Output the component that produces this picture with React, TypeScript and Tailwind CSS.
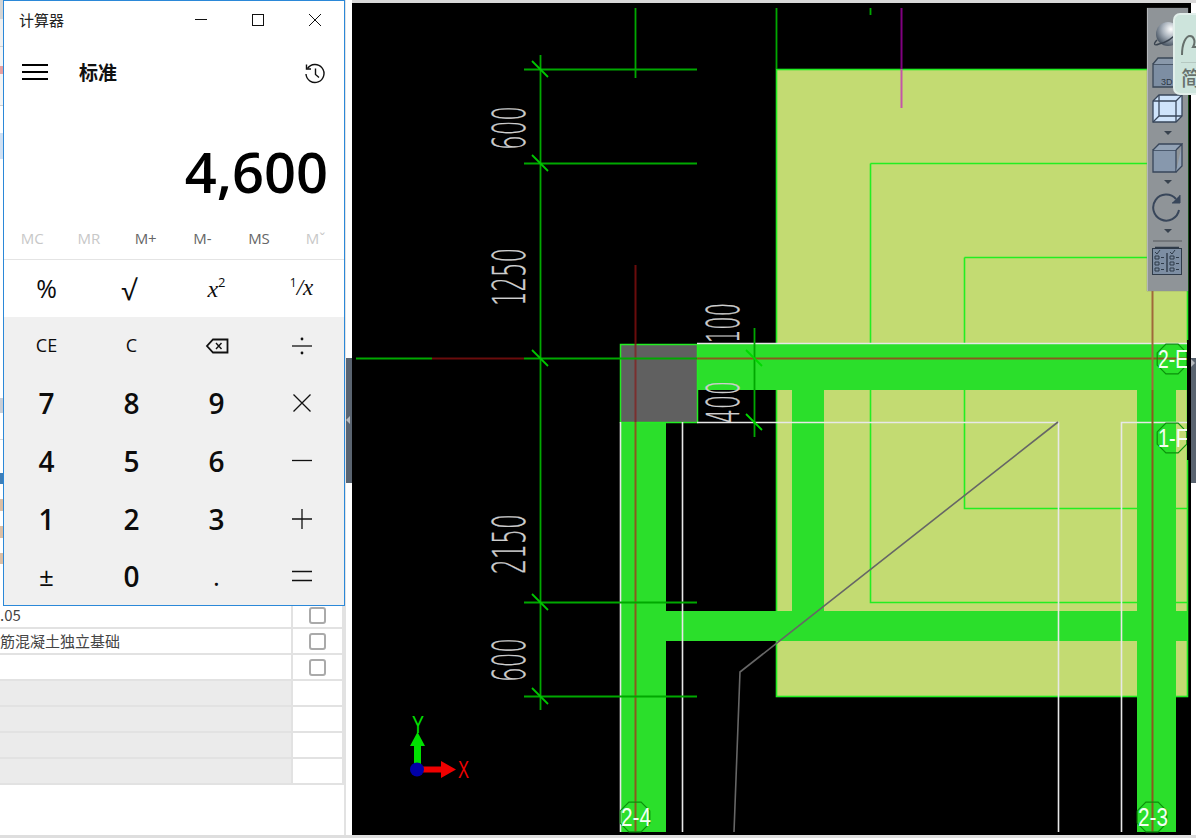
const leftBands = [
  { h: 19, c: "bg-[#d4d4d4]" },
  { h: 27, c: "bg-[#f0f0f0]" },
  { h: 1, c: "bg-[#d0d0d0]" },
  { h: 19, c: "bg-[#f4f4f4]" },
  { h: 8, c: "bg-[#e8a0a0]" },
  { h: 31, c: "bg-[#f4f4f4]" },
  { h: 1, c: "bg-[#d0d0d0]" },
  { h: 27, c: "bg-white" },
  { h: 26, c: "bg-[#cfe0f3]" },
  { h: 239, c: "bg-white" },
  { h: 15, c: "bg-[#c9ced6]" },
  { h: 26, c: "bg-white" },
  { h: 1, c: "bg-[#d8d8d8]" },
  { h: 33, c: "bg-white" },
  { h: 11, c: "bg-[#3f7fb8]" },
  { h: 15, c: "bg-white" },
  { h: 12, c: "bg-[#dcbfa5]" },
  { h: 15, c: "bg-white" },
  { h: 12, c: "bg-[#dcbfa5]" },
  { h: 15, c: "bg-white" },
  { h: 11, c: "bg-[#dcbfa5]" },
  { h: 39, c: "bg-white" },
];

const tableRows = [
  { text: ".05", check: true },
  { text: "筋混凝土独立基础", check: true },
  { text: "", check: true },
  { text: "", check: false },
  { text: "", check: false },
  { text: "", check: false },
  { text: "", check: false },
];

const memoryKeys = [
  { label: "MC", on: false },
  { label: "MR", on: false },
  { label: "M+", on: true },
  { label: "M-", on: true },
  { label: "MS", on: true },
  { label: "Mˇ", on: false },
];

function OpIcon({ d, dots }: { d: string; dots?: boolean }) {
  return (
    <svg width="24" height="24" viewBox="0 0 24 24" fill="none" stroke="#111" strokeWidth="1.3" aria-hidden>
      <path d={d} />
      {dots && (
        <>
          <circle cx="12" cy="5" r="1.4" fill="#111" stroke="none" />
          <circle cx="12" cy="19" r="1.4" fill="#111" stroke="none" />
        </>
      )}
    </svg>
  );
}

function BackIcon() {
  return (
    <svg width="24" height="18" viewBox="0 0 24 18" fill="none" stroke="#111" aria-hidden>
      <path d="M22.5 2.5V15.5H8L2 9L8 2.5Z" strokeWidth="1.8" />
      <path d="M11 6L16.5 12M16.5 6L11 12" strokeWidth="1.4" />
    </svg>
  );
}

function Key({ children, className }: { children: React.ReactNode; className: string }) {
  return <div className={"flex h-full items-center justify-center text-[#0c0c0c] " + className}>{children}</div>;
}

const numKey = "text-[28px] font-semibold";

function Calculator() {
  return (
    <div className="absolute left-[3px] top-0 flex h-[606px] w-[342px] flex-col border border-[#2b88d8] bg-white font-['Open_Sans','Noto_Sans_CJK_SC',sans-serif]">
      <div className="flex h-[38px] shrink-0 items-center pl-[15px] pr-[22px]">
        <span className="flex-1 font-['Noto_Sans_CJK_SC',sans-serif] text-[15px] text-[#222]">计算器</span>
        <svg width="127" height="14" viewBox="0 0 127 14" fill="none" stroke="#111" aria-hidden>
          <path d="M0 6.5H12" />
          <rect x="57.5" y="1.5" width="11" height="11" />
          <path d="M114 1L126 13M126 1L114 13" />
        </svg>
      </div>
      <div className="flex h-[66px] shrink-0 items-center pl-[18px] pr-[18px]">
        <svg width="26" height="16" viewBox="0 0 26 16" stroke="#000" strokeWidth="2" aria-hidden>
          <path d="M0 1H26M0 8H26M0 15H26" />
        </svg>
        <span className="ml-[31px] flex-1 font-['Noto_Sans_CJK_SC',sans-serif] text-[19px] font-bold text-[#111]">标准</span>
        <svg className="mt-[3px]" width="22" height="22" viewBox="0 0 22 22" fill="none" stroke="#111" strokeWidth="1.4" aria-hidden>
          <path d="M3.5 5.5A9 9 0 1 1 2 11" />
          <path d="M2.5 1.5V6H7" />
          <path d="M11.5 5.5V11.5L15 14.5" />
        </svg>
      </div>
      <div className="flex h-[117px] shrink-0 items-end justify-end pb-[13px] pr-[16px]">
        <span className="text-[56px] font-semibold leading-[76px] text-black">4,600</span>
      </div>
      <div className="grid h-[38px] shrink-0 grid-cols-6 items-center border-b border-[#e4e4e4]">
        {memoryKeys.map((key) => (
          <span key={key.label} className={"pb-[4px] text-center text-[15px] " + (key.on ? "text-[#666] font-medium" : "text-[#c8c8c8]")}>
            {key.label}
          </span>
        ))}
      </div>
      <div className="grid h-[57px] shrink-0 grid-cols-4">
        <Key className="text-[25px] font-medium">%</Key>
        <Key className="-ml-[5px] text-[28px]">√</Key>
        <Key className="font-['Liberation_Serif',serif] text-[24px] italic">
          x<sup className="text-[13px] not-italic font-['Open_Sans',sans-serif]">2</sup>
        </Key>
        <Key className="font-['Liberation_Serif',serif] text-[23px] italic">
          <sup className="text-[12px] not-italic font-['Open_Sans',sans-serif]">1</sup>/x
        </Key>
      </div>
      <div className="grid flex-1 grid-cols-4 grid-rows-5 bg-[#f0f0f0]">
        <Key className="text-[18px]">CE</Key>
        <Key className="text-[18px]">C</Key>
        <Key className="">
          <BackIcon />
        </Key>
        <Key className="">
          <OpIcon d="M2 12H22" dots />
        </Key>
        <Key className={numKey}>7</Key>
        <Key className={numKey}>8</Key>
        <Key className={numKey}>9</Key>
        <Key className="">
          <OpIcon d="M3.5 3.5L20.5 20.5M20.5 3.5L3.5 20.5" />
        </Key>
        <Key className={numKey}>4</Key>
        <Key className={numKey}>5</Key>
        <Key className={numKey}>6</Key>
        <Key className="">
          <OpIcon d="M2 11.5H22" />
        </Key>
        <Key className={numKey}>1</Key>
        <Key className={numKey}>2</Key>
        <Key className={numKey}>3</Key>
        <Key className="">
          <OpIcon d="M2 12H22M12 2V22" />
        </Key>
        <Key className="text-[26px]">±</Key>
        <Key className={numKey}>0</Key>
        <Key className="text-[26px]">.</Key>
        <Key className="">
          <OpIcon d="M2 7.5H22M2 16.5H22" />
        </Key>
      </div>
    </div>
  );
}

function hexPoints(cx: number, cy: number, r: number) {
  return Array.from({ length: 8 }, (_, i) => {
    const a = (Math.PI / 4) * i + Math.PI / 8;
    return `${(cx + r * Math.cos(a)).toFixed(1)},${(cy + r * Math.sin(a)).toFixed(1)}`;
  }).join(" ");
}

function DimText({ x, y, len, children }: { x: number; y: number; len: number; children: string }) {
  return (
    <text
      transform={`translate(${x} ${y}) rotate(-90)`}
      textLength={len}
      lengthAdjust="spacingAndGlyphs"
      fontFamily="'DejaVu Sans', sans-serif"
      fontWeight={200}
      fontSize={45}
      fill="#cfcfcf"
      stroke="#cfcfcf"
      strokeWidth="0.4"
    >
      {children}
    </text>
  );
}

function GridMark({ cx, cy, label }: { cx: number; cy: number; label: string }) {
  return (
    <g>
      <polygon points={hexPoints(cx, cy, 16)} fill="none" stroke="#0b8f0b" strokeWidth="1.2" />
      <text
        x={cx - 14}
        y={cy + 9}
        textLength={30}
        lengthAdjust="spacingAndGlyphs"
        fontFamily="'Liberation Sans', sans-serif"
        fontSize={25}
        fill="#f4fff4"
      >
        {label}
      </text>
    </g>
  );
}

function CadDrawing() {
  const ticks = [69, 163, 358, 602, 696];
  return (
    <svg className="block h-[832px] w-[839px]" viewBox="352 3 839 832" aria-hidden>
      <rect x="352" y="3" width="839" height="832" fill="#000" />
      <rect x="776.5" y="69.5" width="411" height="627" fill="#c3db72" stroke="#22ee22" strokeWidth="1.6" />
      <path d="M870.5 163.5V602.5H1187M870.5 163.5H1187M964.5 257.5V508.5H1187M964.5 257.5H1187" fill="none" stroke="#22ee22" strokeWidth="1.6" />

      <g fill="#2bdf2b">
        <rect x="697" y="344" width="490" height="46" />
        <rect x="620" y="422" width="46" height="410" />
        <rect x="792" y="390" width="32" height="221" />
        <rect x="666" y="611" width="521" height="30" />
        <rect x="1137" y="390" width="39" height="442" />
      </g>
      <rect x="620.5" y="344.5" width="77" height="78" fill="#606060" stroke="#22ee22" strokeWidth="1.5" />

      <path
        d="M697 343.5H1187M620.5 422V832M682.5 422V832M697 422.5H1058.5V832M1121.5 832V422.5H1187"
        fill="none"
        stroke="#e8e8e8"
        strokeWidth="1.6"
      />
      <path d="M1058 422L740 672L734 832" fill="none" stroke="#666" strokeWidth="1.6" />

      <path d="M432 358.5H524M635.5 265V344" stroke="#6a0c0c" strokeWidth="2" />
      <path d="M635.5 344V422" stroke="#7a2f2f" strokeWidth="2" />
      <path d="M635.5 422V832M697 358.5H1187M1152.5 390V832" stroke="#8a5a1e" strokeWidth="2" />
      <path d="M1152.5 290V390" stroke="#a0683a" strokeWidth="2" />

      <path
        d="M356 358.5H432M524 358.5H697M540.5 55V710M524 69.5H697M524 163.5H697M524 602.5H697M524 696.5H697M635.5 8V78M776.5 8V69M870.5 8V15M754.5 328V437"
        fill="none"
        stroke="#00a800"
        strokeWidth="1.8"
      />
      {ticks.map((y) => (
        <path key={y} d={`M532 ${y - 8}L548 ${y + 8}`} stroke="#00c800" strokeWidth="1.8" />
      ))}
      <path d="M746 350L762 366M746 414L762 430" stroke="#00d800" strokeWidth="1.8" />

      <path d="M901.5 8V69" stroke="#800080" strokeWidth="2" />
      <path d="M901.5 69V108" stroke="#c455a8" strokeWidth="2" />

      <DimText x={525} y={150} len={44}>600</DimText>
      <DimText x={525} y={306} len={58}>1250</DimText>
      <DimText x={525} y={574} len={60}>2150</DimText>
      <DimText x={525} y={682} len={44}>600</DimText>
      <DimText x={739} y={343} len={40}>100</DimText>
      <DimText x={739} y={423} len={42}>400</DimText>

      <GridMark cx={1172} cy={359} label="2-E" />
      <GridMark cx={1172} cy={438} label="1-F" />
      <GridMark cx={635} cy={817} label="2-4" />
      <GridMark cx={1152} cy={817} label="2-3" />
      <rect x="1187" y="340" width="4" height="120" fill="#000" />

      <path d="M414 770V746H410L417.5 732L425 746H421V770Z" fill="#00e000" />
      <path d="M417 766.5H441V761L456 769.5L441 778V772.5H417Z" fill="#f00000" />
      <circle cx="417" cy="769.5" r="7" fill="#0000a8" />
      <text x="412" y="733" textLength={12} lengthAdjust="spacingAndGlyphs" fontFamily="'Liberation Sans', sans-serif" fontSize={23} fill="#00e000">Y</text>
      <text x="458" y="778" textLength={11} lengthAdjust="spacingAndGlyphs" fontFamily="'Liberation Sans', sans-serif" fontSize={23} fill="#f00000">X</text>
    </svg>
  );
}

function Caret() {
  return <div className="mx-auto h-0 w-0 border-x-[4px] border-t-[4px] border-x-transparent border-t-[#38424e]" />;
}

function CadToolbar() {
  return (
    <div className="absolute left-[795px] top-[8px] flex h-[283px] w-[41px] flex-col items-start border-l border-[#b4b8bb] bg-[#8f9498] pl-[4px] shadow-[0_0_1px_#777]">
      <svg className="mt-[13px]" width="30" height="28" viewBox="0 0 30 28" aria-hidden>
        <defs>
          <radialGradient id="ball" cx="0.62" cy="0.3" r="0.7">
            <stop offset="0" stopColor="#ffffff" />
            <stop offset="0.5" stopColor="#a9b2bc" />
            <stop offset="1" stopColor="#4c5866" />
          </radialGradient>
        </defs>
        <circle cx="16" cy="13" r="12" fill="url(#ball)" />
        <path d="M5 19C1 23 2 25 7 23C12 22 20 18 26 11" fill="none" stroke="#39434f" strokeWidth="1.4" />
      </svg>
      <svg className="mt-[8px]" width="31" height="31" viewBox="0 0 31 31" fill="none" stroke="#3a4757" strokeWidth="1.3" aria-hidden>
        <path d="M1 7H23V30H1Z" fill="#7d8ea3" />
        <path d="M1 7L6 1H29L23 7M29 1V24L23 30" fill="#8998aa" />
        <text x="9" y="28" fontFamily="'Liberation Sans', sans-serif" fontSize={9} fill="#2e3845" stroke="none">3D</text>
      </svg>
      <svg className="mt-[6px]" width="31" height="29" viewBox="0 0 31 29" fill="none" stroke="#38465a" strokeWidth="1.3" aria-hidden>
        <path d="M1 7L7 1H30V22L24 28H1Z" fill="#cfe4fb" />
        <path d="M7 1V22H30M7 22L1 28M1 7H24V28M24 7L30 1" />
      </svg>
      <div className="mt-[8px] w-[31px]"><Caret /></div>
      <svg className="mt-[8px]" width="31" height="30" viewBox="0 0 31 30" fill="none" stroke="#38465a" strokeWidth="1.3" aria-hidden>
        <path d="M1 7H24V29H1Z" fill="#8798ad" />
        <path d="M1 7L7 1H30L24 7M30 1V23L24 29" fill="#93a3b6" />
      </svg>
      <div className="mt-[7px] w-[31px]"><Caret /></div>
      <svg className="mt-[9px]" width="31" height="29" viewBox="0 0 31 29" fill="none" stroke="#38465a" strokeWidth="2" aria-hidden>
        <path d="M24 6A13 13 0 1 0 27 17" />
        <path d="M28 2V10H20" fill="#38465a" strokeWidth="1" />
      </svg>
      <div className="mt-[7px] w-[31px]"><Caret /></div>
      <div className="ml-[1px] mt-[7px] h-[2px] w-[29px] bg-[#72767a]" />
      <svg className="mt-[4px]" width="30" height="29" viewBox="0 0 30 29" fill="#7d8ea3" stroke="#2f3b49" strokeWidth="1" aria-hidden>
        <rect x="0.5" y="2.5" width="29" height="26" />
        <path d="M3 1.5H27M15 7V26" fill="none" strokeWidth="1.4" />
        <path d="M3 10H7V13H3ZM3 16H7V19H3ZM3 22H7V25H3ZM18 10H22V13H18ZM18 16H22V19H18ZM18 22H22V25H18Z" fill="none" />
        <path d="M9 11.5H12M9 17.5H12M9 23.5H12M24 11.5H27M24 17.5H27M24 23.5H27M3 6L5 8L8 4M18 6L20 8L23 4" fill="none" />
      </svg>
    </div>
  );
}

export default function App() {
  return (
    <div className="relative flex h-[838px] w-[1196px] flex-col overflow-hidden bg-white font-['Noto_Sans_CJK_SC',sans-serif]">
      <div className="flex h-[835px] shrink-0">
        <aside className="flex w-[346px] shrink-0 flex-col border-r-2 border-[#e2e2e2] bg-white">
          {leftBands.map((band, i) => (
            <div key={i} className={band.c} style={{ height: band.h }} />
          ))}
          {tableRows.map((row, i) => (
            <div key={i} className="flex h-[26px] w-[344px] shrink-0 border-b-2 border-r-2 border-[#e2e2e2]">
              <div className={"flex w-[293px] items-center overflow-hidden border-r-2 border-[#e2e2e2] text-[15px] text-[#444] " + (row.check ? "bg-white" : "bg-[#ebebeb]")}>
                {row.text}
              </div>
              <div className="flex flex-1 items-center justify-center bg-white pr-[1px]">
                {row.check && <div className="h-[17px] w-[17px] rounded-[3px] border-2 border-[#aaaaaa] bg-white" />}
              </div>
            </div>
          ))}
        </aside>

        <div className="relative flex h-full w-[6px] shrink-0 items-center bg-white">
          <div className="mt-[5px] flex h-[125px] w-[6px] items-center bg-[#5a6470]">
            <div className="h-0 w-0 border-y-[4px] border-r-[4px] border-y-transparent border-r-[#b8bcc0]" />
          </div>
        </div>

        <div className="relative flex-1">
          <div className="h-[3px] bg-[#d8d8d8]" />
          <div className="flex">
            <CadDrawing />
            <div className="flex-1 bg-white">
              <div className="mt-[355px] flex h-[125px] items-start bg-[#5a6470] pt-[1px]">
                <div className="h-0 w-0 border-y-[4px] border-l-[4px] border-y-transparent border-l-[#b8bcc0]" />
              </div>
            </div>
          </div>
          <CadToolbar />
        </div>
      </div>
      <div className="flex-1 bg-[#dedede]" />

      <Calculator />

      <div className="absolute right-0 top-[13px] flex h-[82px] w-[23px] flex-col overflow-hidden rounded-l-[7px] border-2 border-r-0 border-[#e2efeb] bg-[#cde4dc] pl-[6px] pt-[18px]">
        <svg width="20" height="24" viewBox="0 0 20 24" fill="none" stroke="#66706c" strokeWidth="2" aria-hidden>
          <path d="M1 22C1 10 5 3 9 3C13 3 15 9 12 14H20" />
        </svg>
        <div className="mt-[5px] h-px w-[20px] bg-[#b5c8c1]" />
        <span className="mt-[3px] w-[24px] text-[20px] font-medium leading-[24px] text-[#66706c]">简</span>
      </div>
    </div>
  );
}
